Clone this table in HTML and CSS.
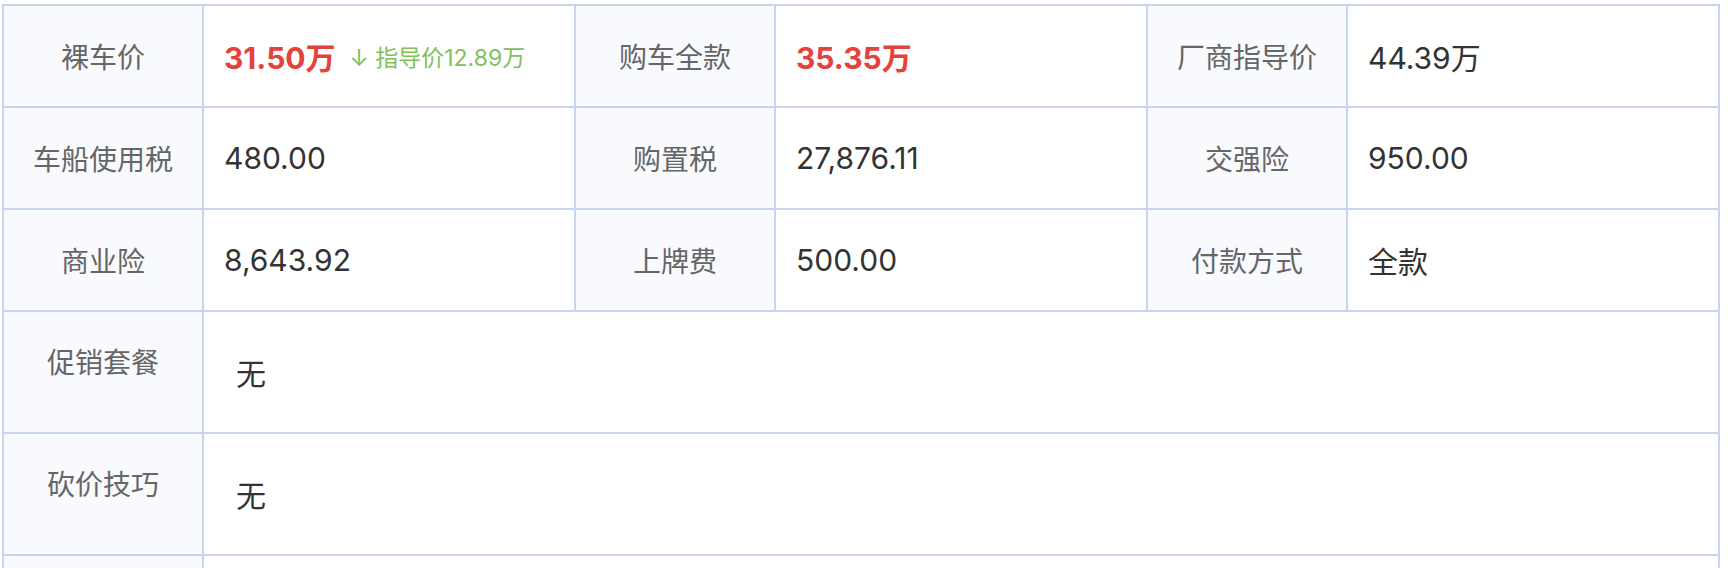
FILE: index.html
```html
<!DOCTYPE html>
<html lang="zh-CN">
<head>
    <meta charset="utf-8">
    <title>报价明细</title>
    <link rel="stylesheet" href="styles.css">
</head>
<body>
    <div class="price_table">
        <div class="cell label">裸车价</div>
        <div class="cell value">
            <span class="price_red">31.50万</span>
            <span class="price_down">↓ 指导价12.89万</span>
        </div>
        <div class="cell label">购车全款</div>
        <div class="cell value"><span class="price_red">35.35万</span></div>
        <div class="cell label">厂商指导价</div>
        <div class="cell value">44.39万</div>

        <div class="cell label">车船使用税</div>
        <div class="cell value">480.00</div>
        <div class="cell label">购置税</div>
        <div class="cell value">27,876.11</div>
        <div class="cell label">交强险</div>
        <div class="cell value">950.00</div>

        <div class="cell label">商业险</div>
        <div class="cell value">8,643.92</div>
        <div class="cell label">上牌费</div>
        <div class="cell value">500.00</div>
        <div class="cell label">付款方式</div>
        <div class="cell value">全款</div>

        <div class="cell label label_top">促销套餐</div>
        <div class="cell value wide">无</div>

        <div class="cell label label_top">砍价技巧</div>
        <div class="cell value wide">无</div>

        <!-- next row starts just below the fold -->
        <div class="cell label"></div>
        <div class="cell value wide"></div>
    </div>
</body>
</html>
```

FILE: styles.css
```css
body {
    margin: 0;
    padding: 4px 8px 0 2px;
    font-family: "Inter", "Noto Sans CJK SC", sans-serif;
    background: #fff;
}
.price_table {
    display: grid;
    grid-template-columns: 198px 370px 198px 370px 198px 370px;
    grid-template-rows: 100px 100px 100px 120px 120px 120px;
    gap: 2px;
    padding: 2px;
    width: 1714px;
    background: #c8d4f0;
}
.cell {
    display: flex;
    align-items: center;
    background: #fff;
}
.label {
    justify-content: center;
    background: #f9fafd;
    color: #666;
    font-size: 28px;
}
.label_top {
    align-items: flex-start;
    padding-top: 29px;
}
.value {
    padding-left: 20px;
    color: #333;
    font-size: 30px;
}
.wide {
    grid-column: span 5;
    padding-left: 32px;
}
.price_red {
    color: #e4433c;
    font-weight: bold;
}
.price_down {
    margin-left: 14px;
    color: #82c05a;
    font-size: 23px;
}
```
